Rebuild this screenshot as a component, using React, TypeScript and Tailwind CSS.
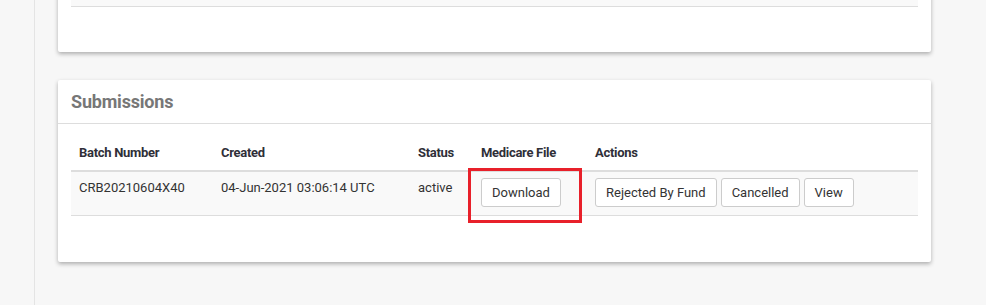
import React from 'react';

const actions = ['Rejected By Fund', 'Cancelled', 'View'];

const Btn = ({ label }: { label: string }) => (
  <button
    type="button"
    className="h-[29px] rounded-[3px] border border-[#cccccc] bg-white px-[10px] text-[13px] leading-none text-[#333333]"
  >
    {label}
  </button>
);

export default function App() {
  return (
    <div
      className="flex h-[305px] w-[986px] overflow-hidden bg-[#f7f7f7] text-[#333333]"
      style={{ fontFamily: 'Roboto, "Liberation Sans", sans-serif' }}
    >
      <div className="w-[35px] shrink-0 border-r border-[#e4e4e4]" />
      <div className="flex flex-1 flex-col pl-[23px] pr-[55px]">
        {/* previous card, scrolled mostly out of view */}
        <div className="mt-[-40px] rounded-[2px] bg-white px-[13px] pb-[45px] shadow-[0_2px_4px_rgba(0,0,0,0.3)]">
          <div className="h-[47px] border-b border-[#dddddd] bg-[#f9f9f9]" />
        </div>

        {/* submissions card */}
        <div className="mt-[28px] rounded-[2px] bg-white shadow-[0_2px_4px_rgba(0,0,0,0.3)]">
          <div className="flex h-[44px] items-center border-b border-[#dddddd] px-[13px]">
            <h3 className="text-[18px] font-bold tracking-[-0.2px] text-[#777777]">Submissions</h3>
          </div>
          <div className="px-[13px] pt-[12px] pb-[46px]">
            <table className="w-full border-collapse text-left text-[13px] leading-[18px]">
              <colgroup>
                <col className="w-[142px]" />
                <col className="w-[197px]" />
                <col className="w-[63px]" />
                <col className="w-[114px]" />
                <col />
              </colgroup>
              <thead>
                <tr className="border-b-2 border-[#dddddd] text-[#2f2f38]">
                  <th className="p-2 font-bold tracking-[-0.3px]">Batch Number</th>
                  <th className="p-2 font-bold tracking-[-0.3px]">Created</th>
                  <th className="p-2 font-bold tracking-[-0.3px]">Status</th>
                  <th className="p-2 font-bold tracking-[-0.3px]">Medicare File</th>
                  <th className="p-2 font-bold tracking-[-0.3px]">Actions</th>
                </tr>
              </thead>
              <tbody>
                <tr className="border-b border-[#dddddd] bg-[#f9f9f9] align-top">
                  <td className="px-2 pt-[7px] pb-[7px]">CRB20210604X40</td>
                  <td className="px-2 pt-[7px] pb-[7px]">04-Jun-2021 03:06:14 UTC</td>
                  <td className="px-2 pt-[7px] pb-[7px]">active</td>
                  <td className="relative px-2 pt-[6px] pb-[8px]">
                    <Btn label="Download" />
                    <div className="pointer-events-none absolute left-[-5px] top-[-4px] h-[55px] w-[114px] border-[3px] border-[#e8202a]" />
                  </td>
                  <td className="px-2 pt-[6px] pb-[8px]">
                    <div className="flex gap-[4px]">
                      {actions.map((a) => (
                        <Btn key={a} label={a} />
                      ))}
                    </div>
                  </td>
                </tr>
              </tbody>
            </table>
          </div>
        </div>
      </div>
    </div>
  );
}
